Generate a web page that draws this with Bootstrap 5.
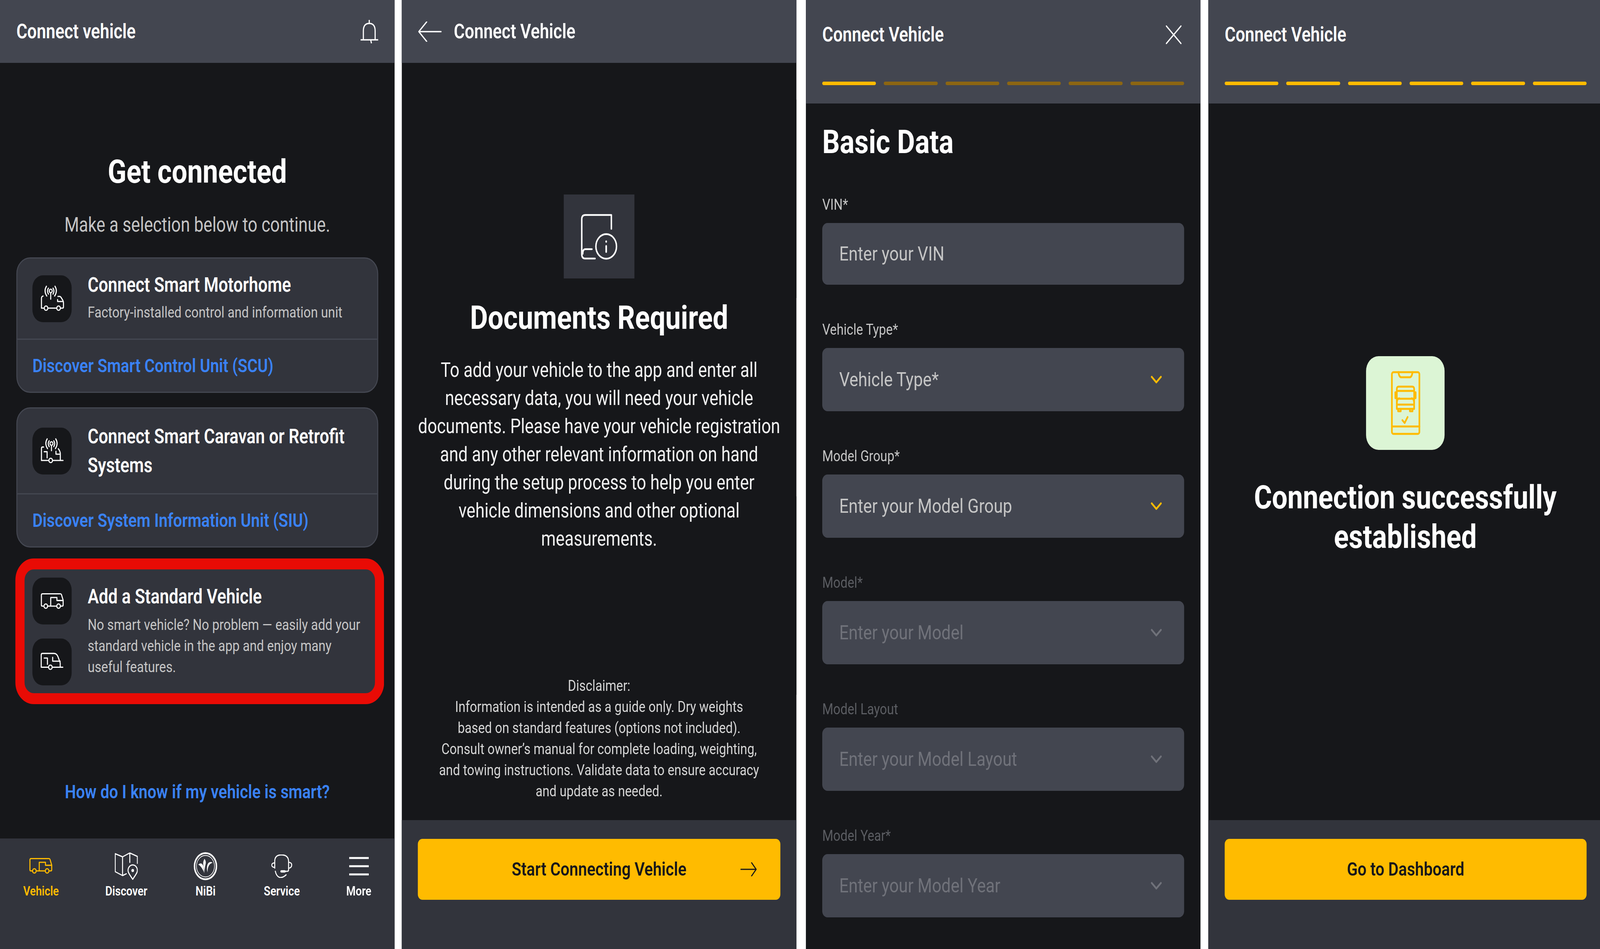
<!DOCTYPE html>
<html lang="en">

<head>
    <meta charset="UTF-8">
    <title>Connect Vehicle</title>
    <link rel="stylesheet" href="https://cdn.jsdelivr.net/npm/bootstrap@5.3.0/dist/css/bootstrap.min.css">
    <style>
        html, body { margin: 0; background: #fff; overflow: hidden; }
        body { height: 2430px; font-family: Roboto, "Liberation Sans", sans-serif; color: #fff; }
        #frame { width: 100vw; height: 2430px; overflow: hidden; }
        #stage { width: 4890px; height: 2430px; transform-origin: 0 0; }

        .phone { width: 1206px; height: 2430px; flex: 0 0 auto; background: #16171a; }
        .phone-2 { margin-left: 22px; }
        .phone-3 { margin-left: 29px; }
        .phone-4 { margin-left: 24px; width: 1197px; }

        .app-head { background: #434650; height: 161px; padding: 0 50px; flex: 0 0 auto; }
        .app-head.tall { height: 265px; padding-top: 61px; }
        .phone-4 .app-head, .phone-4 .app-foot { padding-right: 41px; padding-left: 50px; }
        .app-title { font-size: 51px; line-height: 56px; font-weight: 600; margin: 0; }
        .steps { gap: 24px; margin-top: 92px; }
        .steps span { flex: 1 1 0; height: 9px; border-radius: 5px; background: #8c6612; }
        .steps span.on { background: #ffbb00; }

        .head-title { font-weight: 700; font-size: 84px; line-height: 100px; margin: 0; text-align: center; }

        .screen-main { padding: 0 50px; min-height: 0; }
        .lead-txt { font-size: 51px; line-height: 72px; color: #c5c5c5; text-align: center; margin: 50px 0 47px; }

        .pick-card { background: #32343c; border: 3px solid #444751; border-radius: 42px; color: #fff; }
        .pick-head { padding: 0 46px; gap: 49px; }
        .pick-title { font-size: 51px; line-height: 74px; font-weight: 600; margin: 0; }
        .pick-sub { font-size: 39px; line-height: 54px; color: #c5c5c5; margin: 0; }
        .pick-link { height: 136px; border-top: 3px solid #444751; padding: 0 46px; font-size: 48px; font-weight: 600; color: #3a82f7; text-decoration: none; }
        .ico-tile { width: 120px; height: 120px; flex: 0 0 auto; border-radius: 32px; background: #16171a; }
        .ico-tile svg { width: 120px; height: 120px; display: block; }
        .card-one { margin-bottom: 37px; }
        .card-one .pick-head { height: 205px; }
        .card-one .pick-title { line-height: 56px; margin-bottom: 15px; }
        .card-two .pick-head { height: 217px; }
        .card-std { height: 356px; margin-top: 37px; }
        .card-std .pick-title { line-height: 56px; margin-bottom: 17px; }
        .card-std .pick-head { height: 100%; }
        .red-ring { position: absolute; top: -12px; bottom: -11px; left: -6px; right: -21px; border: 28px solid #e90b05; border-radius: 56px; pointer-events: none; }
        .smart-link { display: block; font-size: 48px; line-height: 70px; font-weight: 600; color: #3a82f7; text-align: center; text-decoration: none; margin-top: 198px; }

        .tabbar { height: 283px; background: #32343c; padding-top: 34px; flex: 0 0 auto; }
        .tab { font-size: 33px; line-height: 40px; font-weight: 600; color: #fff; text-align: center; }
        .tab.on { color: #ffbb00; }
        .tab-ico { height: 74px; margin-bottom: 7px; color: inherit; }

        .doc-tile { width: 216px; height: 215px; background: #32343c; margin: 337px auto 51px; }
        .doc-tile svg { width: 216px; height: 215px; display: block; }
        .body-txt { font-size: 51px; line-height: 72px; text-align: center; margin: 48px -8px 0; color: #f2f2f2; }
        .fine-print { font-size: 38.500px; line-height: 54px; text-align: center; color: #d5d5d5; margin: auto 0 47px; }

        .app-foot { height: 330px; background: #32343c; padding: 48px 49px 0; flex: 0 0 auto; }
        .btn.go { width: 100%; height: 156px; background: #ffbb00; border: 0; border-radius: 14px; color: #16171a; font-size: 48px; font-weight: 600; display: grid; grid-template-columns: 1fr auto 1fr; align-items: center; padding: 0 72px; }
        .btn.go svg { justify-self: end; width: 50px; height: 36px; }

        .basic-title { font-size: 84px; line-height: 100px; font-weight: 700; margin: 49px 0 83px; }
        .form-field { margin-bottom: 88px; }
        .form-field .form-label { display: block; font-size: 38.500px; line-height: 54px; color: #c5c5c5; margin: 0 0 20px; }
        .form-field .field { height: 162px; border: 0; border-radius: 16px; background: #434650; color: #c5c5c5; font-size: 50.500px; padding: 0 52px; box-shadow: none; }
        .form-field .field.vin { height: 158px; }
        .form-field .field svg { width: 34px; height: 20px; margin-right: 16px; color: #ffbb00; }
        .form-field.off .form-label { color: #5b5d62; }
        .form-field.off .field { color: #70727a; }
        .form-field.off .field svg { color: #70727a; }

        .ok-tile { width: 240px; height: 240px; border-radius: 38px; background: #dcf5d5; margin: 647px auto 71px; color: #ffbb00; }
        .ok-tile svg { width: 240px; height: 240px; display: block; }
        .ok-title { font-size: 84px; line-height: 101px; font-weight: 700; text-align: center; margin: 0; }
    </style>
</head>

<body>
    <!-- shared icons -->
    <svg width="0" height="0" class="position-absolute">
        <symbol id="i-rv" viewBox="0 0 120 120">
            <g fill="none" stroke="currentColor" stroke-width="3.200" stroke-linecap="round" stroke-linejoin="round">
                <path d="M35.500 73H30q-2.500 0-2.500-3V45q0-3.500 3.500-3.500h54q3 0 4 2.500l5 14v12q0 3-3 3h-5.500M46.500 73h28M56 73V51h19v7.700h19"/>
                <circle cx="41" cy="73" r="5.500"/>
                <circle cx="80" cy="73" r="5.500"/>
            </g>
        </symbol>
        <symbol id="i-caravan" viewBox="0 0 120 120">
            <g fill="none" stroke="currentColor" stroke-width="3.200" stroke-linecap="round" stroke-linejoin="round">
                <path d="M49.500 73.500H27V42q0-3.800 3.800-3.800H66q8 0 12 8l7 16v11.300M60.500 73.500H93M36 50h10v16M62 48v10h23"/>
                <circle cx="55" cy="73.500" r="5.500"/>
            </g>
        </symbol>
        <symbol id="i-pin-rv" viewBox="0 0 120 120">
            <g fill="none" stroke="currentColor" stroke-width="3.200" stroke-linecap="round" stroke-linejoin="round">
                <path d="M32.700 53q-5 1-5 6v25h8.500M47 84h27M85.500 84H92q3 0 3-3V71q0-4-2-7l-5-7q-1.500-2-4-3H78M77 62v5h15.700M56 46v15"/>
                <circle cx="41.700" cy="84" r="5.500"/>
                <circle cx="80" cy="84" r="5.500"/>
                <circle cx="56" cy="40" r="4.500"/>
                <path d="M49 33q-5.500 7 0 15M63 33q5.500 7 0 15M43 28q-9 12 1 25M69 28q9 12-1 25"/>
            </g>
        </symbol>
        <symbol id="i-pin-caravan" viewBox="0 0 120 120">
            <g fill="none" stroke="currentColor" stroke-width="3.200" stroke-linecap="round" stroke-linejoin="round">
                <path d="M34.300 49.700H31q-3.300 0-3.300 4V84H50M61.700 84H93.700M85.300 84V67q0-6-6-13M36 61.700h9v15.600M72 60.700V68h13.300M58.300 46v13"/>
                <circle cx="56" cy="84" r="5.500"/>
                <circle cx="58.300" cy="40.700" r="4.500"/>
                <path d="M51.300 33.700q-5.500 7 0 15M65.300 33.700q5.500 7 0 15M45.300 28.700q-9 12 1 25M71.300 28.700q9 12-1 25"/>
            </g>
        </symbol>
    </svg>

    <div id="frame">
    <div id="stage" class="d-flex align-items-start">

        <!-- Screen 1: selection -->
        <section class="phone d-flex flex-column">
            <header class="app-head d-flex align-items-center justify-content-between">
                <h1 class="app-title">Connect vehicle</h1>
                <svg width="54" height="60" viewBox="0 0 54 60" fill="none" stroke="#fff" stroke-width="3.500" stroke-linecap="round">
                    <path d="M1 51h52M8.500 51V28Q8.500 9 26.500 9t18 19v23M26.500 1v8M31 51l2 8"/>
                </svg>
            </header>
            <main class="screen-main flex-grow-1">
                <h2 class="head-title" style="margin-top:229px">Get connected</h2>
                <p class="lead-txt">Make a selection below to continue.</p>

                <div class="pick-card card-one">
                    <div class="pick-head d-flex align-items-center">
                        <div class="ico-tile"><svg><use href="#i-pin-rv"/></svg></div>
                        <div>
                            <h3 class="pick-title">Connect Smart Motorhome</h3>
                            <p class="pick-sub">Factory-installed control and information unit</p>
                        </div>
                    </div>
                    <a class="pick-link d-flex align-items-center" href="#">Discover Smart Control Unit (SCU)</a>
                </div>

                <div class="pick-card card-two">
                    <div class="pick-head d-flex align-items-center">
                        <div class="ico-tile"><svg><use href="#i-pin-caravan"/></svg></div>
                        <h3 class="pick-title">Connect Smart Caravan or Retrofit Systems</h3>
                    </div>
                    <a class="pick-link d-flex align-items-center" href="#">Discover System Information Unit (SIU)</a>
                </div>

                <div class="pick-card card-std position-relative">
                    <div class="pick-head d-flex align-items-center">
                        <div class="d-flex flex-column" style="gap:36px">
                            <div class="ico-tile"><svg><use href="#i-rv"/></svg></div>
                            <div class="ico-tile"><svg><use href="#i-caravan"/></svg></div>
                        </div>
                        <div>
                            <h3 class="pick-title">Add a Standard Vehicle</h3>
                            <p class="pick-sub">No smart vehicle? No problem — easily add your standard vehicle in the app and enjoy many useful features.</p>
                        </div>
                    </div>
                    <div class="red-ring"></div>
                </div>

                <a class="smart-link" href="#">How do I know if my vehicle is smart?</a>
            </main>
            <nav class="tabbar d-flex justify-content-around align-items-start">
                <div class="tab on">
                    <div class="tab-ico d-flex align-items-center justify-content-center">
                        <svg width="78" height="78" viewBox="22 22 78 78" fill="none"><use href="#i-rv" width="120" height="120"/></svg>
                    </div>
                    Vehicle
                </div>
                <div class="tab">
                    <div class="tab-ico d-flex align-items-center justify-content-center">
                        <svg width="70" height="70" viewBox="0 0 70 70" fill="none" stroke="#fff" stroke-width="3" stroke-linecap="round" stroke-linejoin="round">
                            <path d="M1 3l22.600 8L45.700 1 69 10v17.700M1 3v46l22.600 10L35 54.300M23.600 11v48M45.700 1v24.300"/>
                            <path d="M54.600 68.700C47 58 40.300 52.500 40.300 46a14.300 14.300 0 0 1 28.600 0c0 6.500-6.700 12-14.300 22.700z"/>
                            <circle cx="54.600" cy="46" r="2.500" fill="#fff"/>
                        </svg>
                    </div>
                    Discover
                </div>
                <div class="tab">
                    <div class="tab-ico d-flex align-items-center justify-content-center">
                        <svg width="72" height="74" viewBox="0 0 72 72" fill="none">
                            <circle cx="36" cy="36" r="33.500" stroke="#fff" stroke-width="4.500"/>
                            <circle cx="36" cy="36" r="27.500" stroke="#fff" stroke-width="1.800"/>
                            <path fill="#fff" d="M14 32C22 25 28 30 30 38c.5 6 1.500 11 3 16-4-7-9-18-19-22zM33 17c4 5 5 9 3 15-2 6-2.500 12-3 19-1-8-4-15-4-22 0-5 2-9 4-12zM58 27c-8-4-15-1-17 9-1 6-.5 11 1.500 16-.5-7 1-14 5-19 2.500-3 6-5 10.500-6z"/>
                        </svg>
                    </div>
                    NiBi
                </div>
                <div class="tab">
                    <div class="tab-ico d-flex align-items-center justify-content-center">
                        <svg width="64" height="60" viewBox="0 0 64 60" fill="none" stroke="#fff" stroke-width="3" stroke-linecap="round" stroke-linejoin="round">
                            <path d="M10.700 35V17Q11 1 31 1q21 0 22 16v20M10.700 21.500C4 21.500 1.500 24 1.500 27s2.500 6 9.200 6M53 20c7 0 9.500 3.500 9.500 7s-2.500 8-9.500 8M53 35v4q0 4-4 4h-8M12.500 43q3 13 14 16 9 1 19-7"/>
                            <path d="M31 43.300h10" stroke-width="6"/>
                        </svg>
                    </div>
                    Service
                </div>
                <div class="tab">
                    <div class="tab-ico d-flex align-items-center justify-content-center">
                        <svg width="60" height="48" viewBox="0 0 60 48" fill="none" stroke="#fff" stroke-width="5">
                            <path d="M0 3h60M0 24h60M0 45h60"/>
                        </svg>
                    </div>
                    More
                </div>
            </nav>
        </section>

        <!-- Screen 2: documents -->
        <section class="phone phone-2 d-flex flex-column">
            <header class="app-head d-flex align-items-center" style="gap:37px">
                <svg width="72" height="52" viewBox="0 0 72 52" fill="none" stroke="#fff" stroke-width="3.500" stroke-linecap="round" stroke-linejoin="round">
                    <path d="M70 26H2M26 1L2 26l24 25"/>
                </svg>
                <h1 class="app-title">Connect Vehicle</h1>
            </header>
            <main class="screen-main flex-grow-1 d-flex flex-column">
                <div class="doc-tile flex-shrink-0">
                    <svg viewBox="0 0 216 215" fill="none" stroke="#fff" stroke-width="4.500" stroke-linecap="round" stroke-linejoin="round">
                        <path d="M145.500 88V52.500H66q-11 0-11 11V152q0 12 10 12h30.500M86 140H66q-8 0-8 12"/>
                        <circle cx="129.700" cy="133" r="31.500"/>
                        <path d="M129.700 132v15M129.700 120v1" stroke-width="5"/>
                    </svg>
                </div>
                <h2 class="head-title">Documents Required</h2>
                <p class="body-txt">To add your vehicle to the app and enter all<br>necessary data, you will need your vehicle<br>documents. Please have your vehicle registration<br>and any other relevant information on hand<br>during the setup process to help you enter<br>vehicle dimensions and other optional<br>measurements.</p>
                <p class="fine-print">Disclaimer:<br>Information is intended as a guide only. Dry weights<br>based on standard features (options not included).<br>Consult owner’s manual for complete loading, weighting,<br>and towing instructions. Validate data to ensure accuracy<br>and update as needed.</p>
            </main>
            <footer class="app-foot">
                <button class="btn go" type="button">
                    <span></span>
                    <span>Start Connecting Vehicle</span>
                    <svg viewBox="0 0 50 36" fill="none" stroke="#16171a" stroke-width="3" stroke-linecap="round" stroke-linejoin="round">
                        <path d="M1 18h47M34 1l14 17-14 17"/>
                    </svg>
                </button>
            </footer>
        </section>

        <!-- Screen 3: basic data -->
        <section class="phone phone-3 d-flex flex-column overflow-hidden">
            <header class="app-head tall">
                <div class="d-flex align-items-center justify-content-between">
                    <h1 class="app-title">Connect Vehicle</h1>
                    <svg class="me-2" width="48" height="48" viewBox="0 0 48 48" fill="none" stroke="#fff" stroke-width="3.500" stroke-linecap="round">
                        <path d="M1.500 1.500l45 45M46.500 1.500l-45 45"/>
                    </svg>
                </div>
                <div class="steps d-flex">
                    <span class="on"></span><span></span><span></span><span></span><span></span><span></span>
                </div>
            </header>
            <main class="screen-main flex-grow-1">
                <h2 class="basic-title">Basic Data</h2>
                <div class="form-field">
                    <label class="form-label">VIN*</label>
                    <div class="form-control field vin d-flex align-items-center">Enter your VIN</div>
                </div>
                <div class="form-field">
                    <label class="form-label">Vehicle Type*</label>
                    <div class="form-control field d-flex align-items-center justify-content-between">
                        <span>Vehicle Type*</span>
                        <svg viewBox="0 0 34 20" fill="none" stroke="currentColor" stroke-width="5" stroke-linecap="round" stroke-linejoin="round"><path d="M3 3l14 14L31 3"/></svg>
                    </div>
                </div>
                <div class="form-field">
                    <label class="form-label">Model Group*</label>
                    <div class="form-control field d-flex align-items-center justify-content-between">
                        <span>Enter your Model Group</span>
                        <svg viewBox="0 0 34 20" fill="none" stroke="currentColor" stroke-width="5" stroke-linecap="round" stroke-linejoin="round"><path d="M3 3l14 14L31 3"/></svg>
                    </div>
                </div>
                <div class="form-field off">
                    <label class="form-label">Model*</label>
                    <div class="form-control field d-flex align-items-center justify-content-between">
                        <span>Enter your Model</span>
                        <svg viewBox="0 0 34 20" fill="none" stroke="currentColor" stroke-width="5" stroke-linecap="round" stroke-linejoin="round"><path d="M3 3l14 14L31 3"/></svg>
                    </div>
                </div>
                <div class="form-field off">
                    <label class="form-label">Model Layout</label>
                    <div class="form-control field d-flex align-items-center justify-content-between">
                        <span>Enter your Model Layout</span>
                        <svg viewBox="0 0 34 20" fill="none" stroke="currentColor" stroke-width="5" stroke-linecap="round" stroke-linejoin="round"><path d="M3 3l14 14L31 3"/></svg>
                    </div>
                </div>
                <div class="form-field off mb-0">
                    <label class="form-label">Model Year*</label>
                    <div class="form-control field d-flex align-items-center justify-content-between">
                        <span>Enter your Model Year</span>
                        <svg viewBox="0 0 34 20" fill="none" stroke="currentColor" stroke-width="5" stroke-linecap="round" stroke-linejoin="round"><path d="M3 3l14 14L31 3"/></svg>
                    </div>
                </div>
            </main>
        </section>

        <!-- Screen 4: success -->
        <section class="phone phone-4 d-flex flex-column">
            <header class="app-head tall">
                <h1 class="app-title">Connect Vehicle</h1>
                <div class="steps d-flex">
                    <span class="on"></span><span class="on"></span><span class="on"></span><span class="on"></span><span class="on"></span><span class="on"></span>
                </div>
            </header>
            <main class="flex-grow-1 ps-5" style="padding-right:41px">
                <div class="ok-tile">
                    <svg viewBox="0 0 240 240" fill="none" stroke="currentColor" stroke-width="5" stroke-linejoin="round" stroke-linecap="round">
                        <rect x="79" y="41" width="84" height="158" rx="5"/>
                        <path d="M99 41q2 13 9 13h25q7 0 9-13M79 180h84"/>
                        <path d="M94 135V84q0-6 6-6h41q6 0 6 6v51zM94 89h53M94 109h53M94 124h53M94 121q0-13 8-13M147 121q0-13-8-13"/>
                        <path d="M98 135v6h8v-6M134 135v6h8v-6"/>
                        <path d="M90 93v14M151 93v14" stroke-width="6"/>
                        <path d="M111 164l7 7 9-15" stroke-width="5"/>
                    </svg>
                </div>
                <h2 class="ok-title">Connection successfully<br>established</h2>
            </main>
            <footer class="app-foot">
                <button class="btn go" type="button">
                    <span></span>
                    <span>Go to Dashboard</span>
                    <span></span>
                </button>
            </footer>
        </section>
    </div>
    </div>

    <script>
        // the window can be narrower than the 4890 design width, fit the row of screens to it
        function fitStage() {
            document.getElementById('stage').style.transform = 'scaleX(' + (window.innerWidth / 4890) + ')';
        }
        fitStage();
        window.addEventListener('resize', fitStage);
    </script>
</body>

</html>
